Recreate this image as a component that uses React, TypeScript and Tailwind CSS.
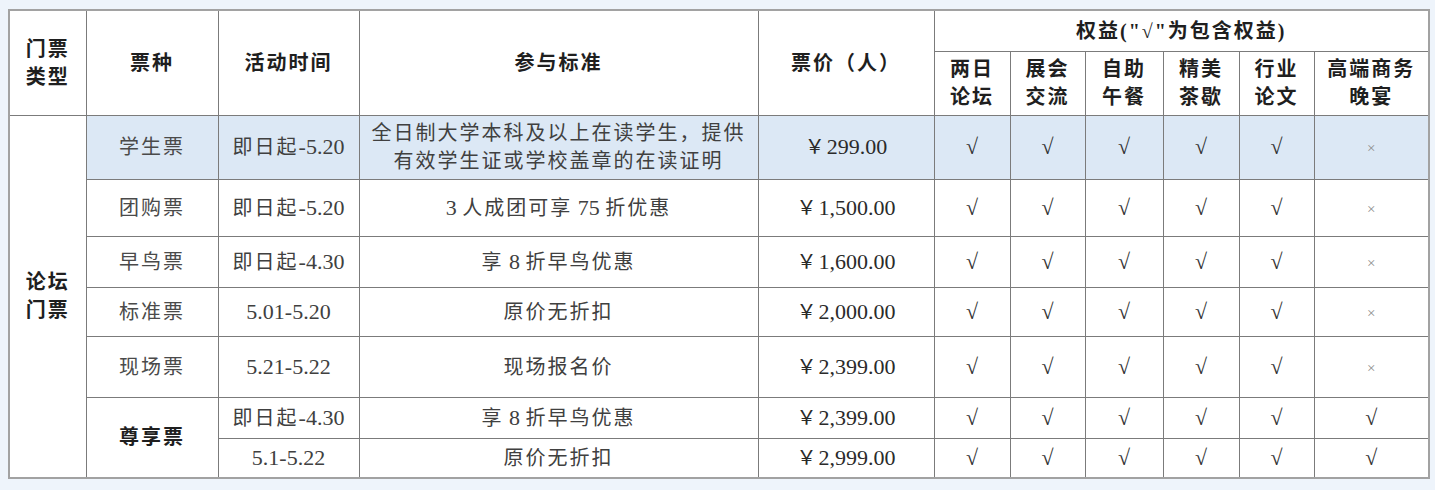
const font = { fontFamily: '"Liberation Serif", "Noto Sans CJK SC", serif' };

type Row = {
  name?: string;
  nameSpan?: number;
  bold?: boolean;
  time: string;
  rule: string[];
  price: string;
  perks: boolean[];
  h: string;
  hl?: boolean;
};

const rows: Row[] = [
  {
    name: "学生票",
    time: "即日起-5.20",
    rule: ["全日制大学本科及以上在读学生，提供", "有效学生证或学校盖章的在读证明"],
    price: "￥299.00",
    perks: [true, true, true, true, true, false],
    h: "h-[64px]",
    hl: true,
  },
  {
    name: "团购票",
    time: "即日起-5.20",
    rule: ["3 人成团可享 75 折优惠"],
    price: "￥1,500.00",
    perks: [true, true, true, true, true, false],
    h: "h-[57px]",
  },
  {
    name: "早鸟票",
    time: "即日起-4.30",
    rule: ["享 8 折早鸟优惠"],
    price: "￥1,600.00",
    perks: [true, true, true, true, true, false],
    h: "h-[51px]",
  },
  {
    name: "标准票",
    time: "5.01-5.20",
    rule: ["原价无折扣"],
    price: "￥2,000.00",
    perks: [true, true, true, true, true, false],
    h: "h-[49px]",
  },
  {
    name: "现场票",
    time: "5.21-5.22",
    rule: ["现场报名价"],
    price: "￥2,399.00",
    perks: [true, true, true, true, true, false],
    h: "h-[61px]",
  },
  {
    name: "尊享票",
    nameSpan: 2,
    bold: true,
    time: "即日起-4.30",
    rule: ["享 8 折早鸟优惠"],
    price: "￥2,399.00",
    perks: [true, true, true, true, true, true],
    h: "h-[41px]",
  },
  {
    time: "5.1-5.22",
    rule: ["原价无折扣"],
    price: "￥2,999.00",
    perks: [true, true, true, true, true, true],
    h: "h-[40px]",
  },
];

const perkHeads = [
  ["两日", "论坛"],
  ["展会", "交流"],
  ["自助", "午餐"],
  ["精美", "茶歇"],
  ["行业", "论文"],
  ["高端商务", "晚宴"],
];

const cell = "border border-[#7b7b7b] text-center align-middle p-0";

// CJK runs keep the wide spacing, latin runs (digits) get the bigger serif size
function Mixed({ text }: { text: string }) {
  const parts = text.split(/([\u3000-\u9fff\uff00-\uffef]+)/).filter(Boolean);
  return (
    <>
      {parts.map((p, i) =>
        /[\u3000-\u9fff\uff00-\uffef]/.test(p) ? (
          <span key={i} className="tracking-[2px]">{p}</span>
        ) : (
          <span key={i} className="text-[22px] tracking-normal">{p}</span>
        )
      )}
    </>
  );
}

export default function App() {
  return (
    <div className="w-[1435px] h-[490px] bg-[#eef4fb] pt-[9px] pl-[8px]" style={font}>
      <table className="table-fixed border-collapse border-2 border-[#a2a2a2] bg-white w-[1420px] text-[20px] leading-[28px] text-[#3a3a3a]">
        <colgroup>
          <col className="w-[77px]" />
          <col className="w-[132px]" />
          <col className="w-[141px]" />
          <col className="w-[399px]" />
          <col className="w-[176px]" />
          <col className="w-[76px]" />
          <col className="w-[75px]" />
          <col className="w-[78px]" />
          <col className="w-[76px]" />
          <col className="w-[75px]" />
          <col className="w-[115px]" />
        </colgroup>
        <thead className="text-[#1f1f1f] tracking-[2px]">
          <tr className="h-[41px]">
            <th rowSpan={2} className={cell + " font-bold"}>
              门票
              <br />
              类型
            </th>
            <th rowSpan={2} className={cell + " font-bold"}>票种</th>
            <th rowSpan={2} className={cell + " font-bold"}>活动时间</th>
            <th rowSpan={2} className={cell + " font-bold"}>参与标准</th>
            <th rowSpan={2} className={cell + " font-bold"}>票价（人）</th>
            <th colSpan={6} className={cell + " font-bold"}>权益("√"为包含权益)</th>
          </tr>
          <tr className="h-[64px]">
            {perkHeads.map((p) => (
              <th key={p[0]} className={cell + " font-bold"}>
                {p[0]}
                <br />
                {p[1]}
              </th>
            ))}
          </tr>
        </thead>
        <tbody>
          {rows.map((r, i) => (
            <tr key={i} className={r.h + (r.hl ? " bg-[#dce8f5]" : "")}>
              {i === 0 && (
                <td rowSpan={7} className={cell + " bg-white font-bold text-[#1f1f1f] tracking-[2px]"}>
                  论坛
                  <br />
                  门票
                </td>
              )}
              {r.name && (
                <td
                  rowSpan={r.nameSpan ?? 1}
                  className={cell + " tracking-[2px]" + (r.bold ? " font-bold text-[#1f1f1f]" : " text-[#4a4a4a]")}
                >
                  {r.name}
                </td>
              )}
              <td className={cell + " text-[#404040]"}>
                <Mixed text={r.time} />
              </td>
              <td className={cell + " text-[#404040]"}>
                {r.rule.map((line) => (
                  <div key={line}>
                    <Mixed text={line} />
                  </div>
                ))}
              </td>
              <td className={cell + " text-[#2a2a2a]"}>
                <Mixed text={r.price} />
              </td>
              {r.perks.map((ok, j) => (
                <td key={j} className={cell}>
                  {ok ? (
                    <span className="text-[22px] text-[#333]">√</span>
                  ) : (
                    <span className="text-[15px] text-[#8c8c8c]">×</span>
                  )}
                </td>
              ))}
            </tr>
          ))}
        </tbody>
      </table>
    </div>
  );
}
